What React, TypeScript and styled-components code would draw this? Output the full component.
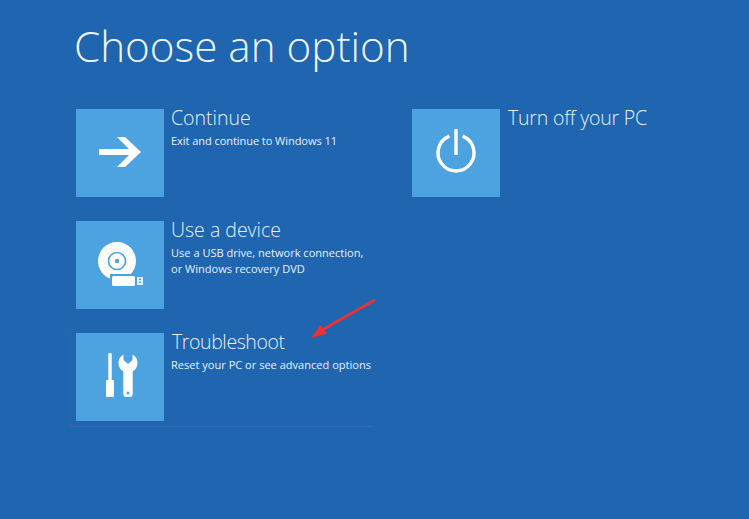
import React from "react";
import styled, { createGlobalStyle } from "styled-components";

const GlobalStyle = createGlobalStyle`
	html, body {
		margin: 0;
		padding: 0;
		background: #1f65b0;
	}
`;

const Page = styled.div`
	position: relative;
	width: 749px;
	height: 519px;
	overflow: hidden;
	box-sizing: border-box;
	padding: 18px 0 0 74px;
	background: #1f65b0;
	color: #fff;
	font-family: "Open Sans", "Liberation Sans", sans-serif;
`;

const Title = styled.h1`
	margin: 0 0 28px;
	height: 63px;
	font-size: 42.2px;
	line-height: 56px;
	font-weight: 300;
	color: #eef4fa;
`;

const Columns = styled.div`
	display: flex;
	gap: 47px;
	padding-left: 2px;
`;

const Column = styled.div`
	display: flex;
	flex-direction: column;
	gap: 24px;
	width: 289px;
`;

const Option = styled.div<{ $selected?: boolean }>`
	display: flex;
	gap: 7px;
	height: 88px;
	${(p) =>
		p.$selected &&
		`
		margin-left: -6px;
		padding-left: 5px;
		padding-bottom: 5px;
		width: 297px;
		border-bottom: 1px solid #3c6aa8;
		border-left: 1px solid #2a68ad;
	`}
`;

const Tile = styled.div`
	flex: 0 0 88px;
	width: 88px;
	height: 88px;
	background: #4da3df;
`;

const TileIcon = styled.svg`
	display: block;
`;

const Copy = styled.div`
	display: flex;
	flex-direction: column;
	min-width: 0;
`;

const Name = styled.div<{ $tracking?: string }>`
	font-size: 19.5px;
	line-height: 22px;
	margin-top: -2px;
	margin-left: ${(p) => (p.$tracking ? "1px" : "0")};
	letter-spacing: ${(p) => p.$tracking || "0"};
	font-weight: 300;
	white-space: nowrap;
	color: #e8f1f9;
`;

const Description = styled.div<{ $tracking?: string }>`
	margin-top: 4px;
	font-size: 11.05px;
	line-height: 16px;
	letter-spacing: ${(p) => p.$tracking || "0"};
	color: #e8f1f9;
	white-space: nowrap;
`;

const Pointer = styled.svg`
	position: absolute;
	left: 305px;
	top: 295px;
`;

const ArrowIcon = () => (
	<TileIcon width="88" height="88" viewBox="0 0 88 88">
		<path
			d="M23 40h30L41 28h8l16 15-16 15h-8l12-12H23z"
			fill="#fff"
		/>
	</TileIcon>
);

const DeviceIcon = () => (
	<TileIcon width="88" height="88" viewBox="0 0 88 88">
		<circle cx="41" cy="40" r="19" fill="#fff" />
		<circle cx="41" cy="40" r="8.500" fill="none" stroke="#4da3df" strokeWidth="1.600" />
		<circle cx="41" cy="40" r="2.200" fill="#4da3df" />
		<rect x="34" y="53" width="27" height="14" fill="#4da3df" />
		<rect x="36" y="55" width="23" height="10" rx="1.500" fill="#fff" />
		<rect x="61" y="56" width="6" height="8" fill="#e6f2fb" />
		<rect x="63" y="57.500" width="2" height="1.500" fill="#4da3df" />
		<rect x="63" y="60.500" width="2" height="1.500" fill="#4da3df" />
	</TileIcon>
);

const ToolsIcon = () => (
	<TileIcon width="88" height="88" viewBox="0 0 88 88">
		<path
			d="M33.300 20h1.400a1 1 0 0 1 1 1v26H37a1 1 0 0 1 1 1v15a1 1 0 0 1-1 1h-6a1 1 0 0 1-1-1V48a1 1 0 0 1 1-1h1.300V21a1 1 0 0 1 1-1z"
			fill="#fff"
		/>
		<path
			d="M47.500 21.500V27l4.500 4 4.500-4v-5.500c3 1.500 5 4.500 5 8.500s-2 7-4.800 8.500V61a3 3 0 0 1-3 3h-3.400a3 3 0 0 1-3-3V38.500c-2.800-1.500-4.800-4.500-4.800-8.500s2-7 5-8.500z"
			fill="#fff"
		/>
		<circle cx="52" cy="60" r="1.500" fill="#4da3df" />
	</TileIcon>
);

const PowerIcon = () => (
	<TileIcon width="88" height="88" viewBox="0 0 88 88">
		<path d="M44 20v26" stroke="#fff" strokeWidth="3.400" fill="none" />
		<path
			d="M37.500 27.200A18 18 0 1 0 50.500 27.200"
			stroke="#fff"
			strokeWidth="3.400"
			fill="none"
		/>
	</TileIcon>
);

const leftOptions = [
	{
		name: "Continue",
		lines: ["Exit and continue to Windows 11"],
		icon: <ArrowIcon />,
		lineTracking: "-0.07px",
	},
	{
		name: "Use a device",
		lines: ["Use a USB drive, network connection,", "or Windows recovery DVD"],
		icon: <DeviceIcon />,
	},
	{
		name: "Troubleshoot",
		lines: ["Reset your PC or see advanced options"],
		icon: <ToolsIcon />,
		selected: true,
		nameTracking: "-0.4px",
	},
];

const App: React.FC = () => {
	return (
		<Page>
			<GlobalStyle />
			<Title>Choose an option</Title>
			<Columns>
				<Column>
					{leftOptions.map((o) => (
						<Option key={o.name} $selected={o.selected}>
							<Tile>{o.icon}</Tile>
							<Copy>
								<Name $tracking={o.nameTracking}>{o.name}</Name>
								<Description $tracking={o.lineTracking}>
									{o.lines.map((l) => (
										<div key={l}>{l}</div>
									))}
								</Description>
							</Copy>
						</Option>
					))}
				</Column>
				<Column>
					<Option>
						<Tile>
							<PowerIcon />
						</Tile>
						<Copy>
							<Name $tracking="-0.2px">Turn off your PC</Name>
						</Copy>
					</Option>
				</Column>
			</Columns>
			<Pointer width="80" height="50" viewBox="0 0 80 50">
				<path d="M70 5L17 35" stroke="#ea3237" strokeWidth="3" fill="none" />
				<path d="M6 43l9.500-13 6.500 8.500z" fill="#ea3237" />
			</Pointer>
		</Page>
	);
};

export default App;
